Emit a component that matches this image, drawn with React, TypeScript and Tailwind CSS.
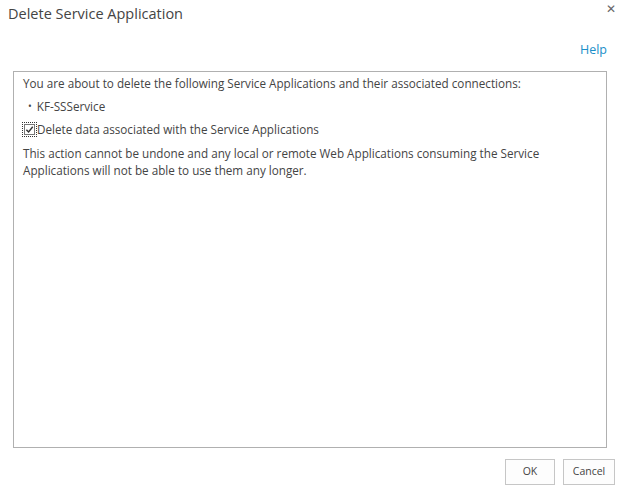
import { useState } from "react";

export default function App() {
  const [deleteData, setDeleteData] = useState(true);

  return (
    <div
      className="relative flex h-[487px] w-[620px] flex-col bg-white text-[#444]"
      style={{ fontFamily: '"Segoe UI", "Open Sans", sans-serif' }}
    >
      {/* dialog header */}
      <div className="flex items-start justify-between pl-2 pr-[4px] pt-[3px]">
        <h1 className="text-[14.5px] font-normal text-[#444]">Delete Service Application</h1>
        <button className="text-[12px] leading-none text-[#666]" aria-label="Close">
          ✕
        </button>
      </div>

      <div className="flex justify-end pr-[13px] pt-[16px]">
        <a className="text-[12.5px] text-[#1a8fc9]">Help</a>
      </div>

      {/* message body */}
      <div className="mx-[13px] mt-[11px] h-[377px] border border-[#b0b0b0] px-[9px] pt-[3px] text-[11.7px] leading-[17px]">
        <p>You are about to delete the following Service Applications and their associated connections:</p>
        <ul className="mt-[6px] pl-[5px]">
          <li className="flex items-center gap-[5px]">
            <span className="text-[10px]">•</span>
            KF-SSService
          </li>
        </ul>
        <label className="mt-[6px] flex cursor-pointer items-center">
          <span className="flex h-[13px] w-[13px] items-center justify-center outline-1 outline-dotted outline-[#333]">
            <input
              type="checkbox"
              checked={deleteData}
              onChange={(e) => setDeleteData(e.target.checked)}
              className="sr-only"
            />
            <span className="flex h-[11px] w-[11px] items-center justify-center border border-[#777] bg-white">
              {deleteData && (
                <svg viewBox="0 0 10 10" className="h-[9px] w-[9px]">
                  <path d="M1.5 5.2 L4 7.8 L8.6 2" fill="none" stroke="#333" strokeWidth="1.6" />
                </svg>
              )}
            </span>
          </span>
          <span className="ml-[1px]">Delete data associated with the Service Applications</span>
        </label>
        <p className="mt-[7px] pr-[30px]">
          This action cannot be undone and any local or remote Web Applications consuming the Service Applications
          will not be able to use them any longer.
        </p>
      </div>

      {/* footer buttons */}
      <div className="mt-[11px] flex justify-end gap-[8px] pr-[5px]">
        <button className="h-[26px] w-[50px] border border-[#c6c6c6] bg-[#fdfdfd] text-[10.5px] text-[#444]">OK</button>
        <button className="h-[26px] w-[52px] border border-[#c6c6c6] bg-[#fdfdfd] text-[10.5px] text-[#444]">
          Cancel
        </button>
      </div>
    </div>
  );
}
